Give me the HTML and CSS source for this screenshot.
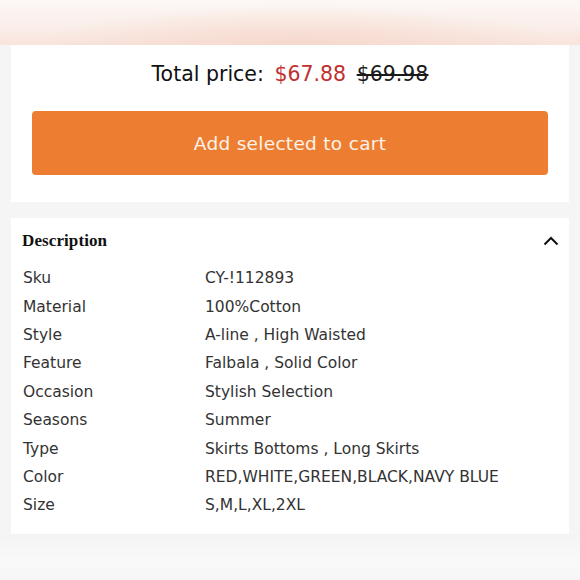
FILE: index.html
```html
<!DOCTYPE html>
<html lang="en">
<head>
<meta charset="utf-8">
<title>Total price</title>
<link rel="stylesheet" href="styles.css">
</head>
<body>
<div class="hero"></div>
<section class="card price-card">
  <p class="total">
    <span class="total-label">Total price:</span>
    <span class="total-now">$67.88</span>
    <span class="total-was">$69.98</span>
  </p>
  <button class="cart-btn" type="button">Add selected to cart</button>
</section>
<section class="card desc-card">
  <div class="desc-head">
    <h2 class="desc-title">Description</h2>
    <svg class="chevron" width="16" height="10" viewBox="0 0 16 10" aria-hidden="true"><path d="M1.5 8.5 L8 2 L14.5 8.5" fill="none" stroke="#111" stroke-width="2"/></svg>
  </div>
  <dl class="specs">
    <div class="spec"><dt>Sku</dt><dd>CY-!112893</dd></div>
    <div class="spec"><dt>Material</dt><dd>100%Cotton</dd></div>
    <div class="spec"><dt>Style</dt><dd>A-line , High Waisted</dd></div>
    <div class="spec"><dt>Feature</dt><dd>Falbala , Solid Color</dd></div>
    <div class="spec"><dt>Occasion</dt><dd>Stylish Selection</dd></div>
    <div class="spec"><dt>Seasons</dt><dd>Summer</dd></div>
    <div class="spec"><dt>Type</dt><dd>Skirts Bottoms , Long Skirts</dd></div>
    <div class="spec"><dt>Color</dt><dd>RED,WHITE,GREEN,BLACK,NAVY BLUE</dd></div>
    <div class="spec"><dt>Size</dt><dd>S,M,L,XL,2XL</dd></div>
  </dl>
</section>
<div class="footer-fade"></div>
</body>
</html>
```

FILE: styles.css
```css
html, body {
  margin: 0;
  padding: 0;
}
body {
  background: #f5f5f5;
  font-family: "DejaVu Sans", "Noto Sans", sans-serif;
  color: #222;
  width: 580px;
  height: 580px;
  overflow: hidden;
}
.hero {
  height: 45px;
  background:
    radial-gradient(ellipse 260px 40px at 300px 45px, rgba(246, 214, 202, 0.85), rgba(246, 214, 202, 0) 100%),
    linear-gradient(180deg, #fcf8f6 0%, #faeee9 60%, #f8e4dc 100%);
}
.card {
  background: #fff;
  margin: 0 11px;
}
.price-card {
  padding: 17px 21px 27px;
  display: flex;
  flex-direction: column;
  align-items: stretch;
}
.total {
  margin: 0 0 25px;
  text-align: center;
  font-size: 20.5px;
  line-height: 24px;
}
.total-label {
  color: #111;
  margin-right: 4px;
}
.total-now {
  color: #c0302f;
  margin-right: 4px;
}
.total-was {
  color: #1a1a1a;
  text-decoration: line-through;
  text-decoration-thickness: 1.5px;
}
.cart-btn {
  height: 64px;
  border: none;
  border-radius: 4px;
  background: #ed7e31;
  color: #fdf2ea;
  font-family: inherit;
  font-size: 18.5px;
  letter-spacing: 0.3px;
  cursor: pointer;
}
.desc-card {
  margin-top: 16px;
  padding: 12px 11px 16px;
  height: 316px;
  box-sizing: border-box;
}
.desc-head {
  display: flex;
  align-items: center;
  justify-content: space-between;
  height: 22px;
}
.desc-title {
  margin: 0;
  font-family: "Liberation Serif", "DejaVu Serif", serif;
  font-size: 17px;
  font-weight: bold;
  color: #111;
  letter-spacing: 0.1px;
}
.chevron {
  display: block;
  margin-right: -1px;
}
.specs {
  margin: 12px 0 0;
  padding-left: 1px;
}
.spec {
  display: grid;
  grid-template-columns: 182px 1fr;
  height: 28.4px;
  align-items: center;
  font-size: 15.5px;
  color: #333;
}
.spec dt, .spec dd {
  margin: 0;
}
.footer-fade {
  height: 46px;
  background: linear-gradient(180deg, #f4f4f4 0%, #f9f9f9 60%, #f6f6f6 100%);
}
```
